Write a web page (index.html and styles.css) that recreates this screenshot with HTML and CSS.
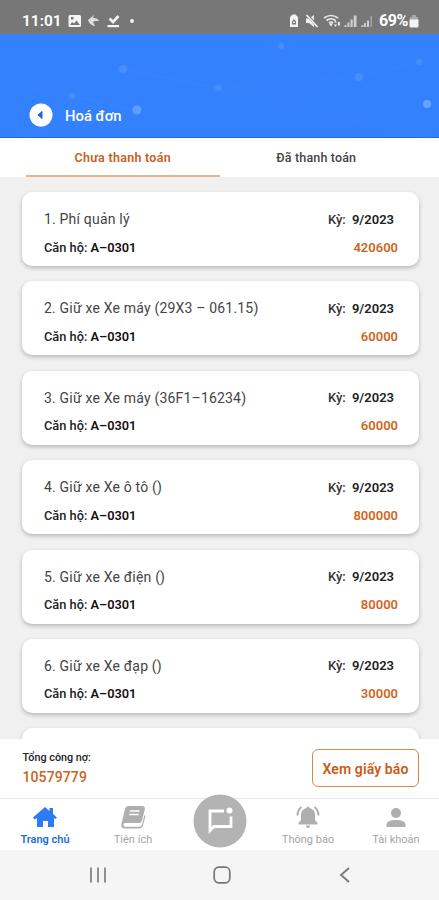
FILE: index.html
```html
<!DOCTYPE html>
<html lang="vi">
<head>
<meta charset="utf-8">
<meta name="viewport" content="width=device-width, initial-scale=1">
<title>Hoá đơn</title>
<link rel="stylesheet" href="styles.css">
</head>
<body>
<div class="app">
  <div class="status">
    <span class="clock">11:01</span>
    <svg class="status-left" width="74" height="16" viewBox="0 0 74 16" fill="#f4f4f4">
      <path fill-rule="evenodd" d="M3 2h9.500q1.500 0 1.500 1.500v9q0 1.500-1.500 1.500H3q-1.500 0-1.500-1.500v-9Q1.500 2 3 2zm0 10h10L9.500 7.500 7 10.500 5 9zM4 4v2.500h2.500V4z"/>
      <path d="M21 7l6-5-1 3q5 0 6 3l-4 0-2 1 2 4q-5-1-6-4z" fill="#dedede"/>
      <path d="M42.500 5.500l3.500 3.500L51.500 3" fill="none" stroke="#f4f4f4" stroke-width="2.600"/>
      <path d="M40.500 12h11.500v2.200H40.500z"/><circle cx="65" cy="8" r="1.900"/>
    </svg>
    <svg class="status-right" width="84" height="16" viewBox="0 0 84 16" fill="#f4f4f4">
      <path fill-rule="evenodd" d="M1 4l2.500-2.500h3L9 4v10H1zm2 7.500h4v-3L5 6 3 8.500z"/><path d="M4 8.500h2v1.500H4z"/>
      <path d="M17 5.500h3L25 2v12l-5-4h-3z"/><path d="M18 2l11 12" stroke="#777" stroke-width="3"/><path d="M17.500 2l11 12" stroke="#f4f4f4" stroke-width="1.700"/>
      <g fill="none" stroke="#e8e8e8" stroke-width="1.700"><path d="M35 5q7-5 14 0M37.500 7.500q4.500-3.500 9 0M40 10q2-1.700 4 0"/></g>
      <path d="M40 10.500h4l-2 3zM45 9.500l1.500-2L48 9.500zM45 11.500l1.500 2.500 1.500-2.500zM49 9h1.800v3.500H49z"/>
      <g fill="#cfcfcf"><path d="M55.500 12h2v2h-2zM58.500 9.500h2V14h-2zM61.500 6.500h2.200V14h-2.200zM64.700 2.500h2.800V14h-2.800z"/><path d="M72.500 12h1.800v2h-1.800zM75 10h2v4h-2zM78 7.500h2V14h-2z"/><path d="M81.500 3H83v11h-1.500z" fill="#a5a5a5"/></g>
    </svg>
    <span class="percent">69%</span>
    <svg class="battery" width="10" height="14" viewBox="0 0 10 14"><path d="M3 1h4v2h2v3H1V3h2z" fill="#aaa"/><path d="M.5 5.500h9V12q0 1.500-1.500 1.500H2Q.5 13.500.5 12z" fill="#f4f4f4"/></svg>
  </div>
  <header class="header">
    <svg class="network" width="439" height="104" viewBox="0 0 439 104">
      <g stroke="#79afff" stroke-width="1" opacity=".08" fill="none"><path d="M0 48l72 14 51-27 96 19 140-11 60-15M123 35l14 41M219 54l60-42M219 54l208 50M72 62l65 14M25 104l47-42"/></g>
      <g fill="#8fc0ff" opacity=".2"><circle cx="123" cy="35" r="4"/><circle cx="72" cy="62" r="3"/><circle cx="281" cy="12" r="3"/><circle cx="359" cy="43" r="4"/><circle cx="419" cy="28" r="3"/><circle cx="218" cy="54" r="3"/></g>
      <circle cx="137" cy="76" r="4.500" fill="#5c9eff"/><circle cx="427" cy="70" r="4" fill="#66a4ff"/>
    </svg>
    <div class="title-row">
      <svg width="24" height="24" viewBox="0 0 24 24"><circle cx="12" cy="12" r="11.500" fill="#fff"/><path d="M9 12l4-3.500v7z" fill="#1768dc" stroke="#1768dc" stroke-linejoin="round"/></svg>
      <h1>Hoá đơn</h1>
    </div>
  </header>
  <nav class="tabs">
    <div class="tab active"><span>Chưa thanh toán</span></div>
    <div class="tab"><span>Đã thanh toán</span></div>
  </nav>
  <main class="list">
    <article class="card"><div class="row"><h2>1. Phí quản lý</h2><span class="period">Kỳ: <b>9/2023</b></span></div><div class="row"><span class="unit">Căn hộ: <b>A–0301</b></span><span class="amount">420600</span></div></article>
    <article class="card"><div class="row"><h2>2. Giữ xe Xe máy (29X3 – 061.15)</h2><span class="period">Kỳ: <b>9/2023</b></span></div><div class="row"><span class="unit">Căn hộ: <b>A–0301</b></span><span class="amount">60000</span></div></article>
    <article class="card"><div class="row"><h2>3. Giữ xe Xe máy (36F1–16234)</h2><span class="period">Kỳ: <b>9/2023</b></span></div><div class="row"><span class="unit">Căn hộ: <b>A–0301</b></span><span class="amount">60000</span></div></article>
    <article class="card"><div class="row"><h2>4. Giữ xe Xe ô tô ()</h2><span class="period">Kỳ: <b>9/2023</b></span></div><div class="row"><span class="unit">Căn hộ: <b>A–0301</b></span><span class="amount">800000</span></div></article>
    <article class="card"><div class="row"><h2>5. Giữ xe Xe điện ()</h2><span class="period">Kỳ: <b>9/2023</b></span></div><div class="row"><span class="unit">Căn hộ: <b>A–0301</b></span><span class="amount">80000</span></div></article>
    <article class="card"><div class="row"><h2>6. Giữ xe Xe đạp ()</h2><span class="period">Kỳ: <b>9/2023</b></span></div><div class="row"><span class="unit">Căn hộ: <b>A–0301</b></span><span class="amount">30000</span></div></article>
    <article class="card"></article>
  </main>
  <section class="total">
    <div><div class="total-label">Tổng công nợ:</div><div class="total-value">10579779</div></div>
    <button class="notice">Xem giấy báo</button>
  </section>
  <nav class="bottom">
    <div class="item home"><svg width="26" height="24" viewBox="0 0 26 24"><path d="M1 12.500L13 2l4.500 4V3H21v6l4 3.500-1.500 1.500L22 13v9h-6v-6h-5v6H5v-9l-2.500 1.500z" fill="#2c7cf5"/></svg><span>Trang chủ</span></div>
    <div class="item util"><svg width="26" height="24" viewBox="0 0 26 24"><path d="M8.500 1H22q3.500 0 2.800 3.500L22 15.500q-.6 2.500-3 2.500H5Q3.500 18 3.500 20T5.500 21.800H19q2.300 0 3-2.300l2.500-9.500 1 1-2.500 9.500Q22 23.500 19 23.500H4.500Q.5 23.500 1.500 18.500L5 4q.7-3 3.500-3z" fill="#afafaf"/><path d="M10 6h9.500M9.200 9.500h9.500" stroke="#fff" stroke-width="1.500"/></svg><span>Tiện ích</span></div>
    <div class="item chat"><svg width="54" height="54" viewBox="0 0 54 54"><circle cx="27" cy="27" r="26.500" fill="#b3b3b3"/><path d="M31 17H17v19.500l4-4h17V22.500" fill="none" stroke="#fff" stroke-width="2.800"/><circle cx="36.500" cy="16.500" r="3" fill="#fff"/></svg></div>
    <div class="item bell"><svg width="26" height="24" viewBox="0 0 26 24"><path d="M11.500 3Q11.500 1.500 13 1.500T14.500 3Q20 4.500 20 10v5l2.500 3v1.500h-19V18L6 15v-5q0-5.500 5.500-7zM11 20.500h4q0 2.500-2 2.500t-2-2.500z" fill="#afafaf"/><path d="M6.500 2Q2.500 5 2.500 10.500M19.500 2q4 3 4 8.500" fill="none" stroke="#afafaf" stroke-width="2"/></svg><span>Thông báo</span></div>
    <div class="item account"><svg width="26" height="24" viewBox="0 0 26 24"><circle cx="13" cy="8" r="5" fill="#afafaf"/><path d="M3.500 22v-2.500q0-4.500 9.500-4.500t9.500 4.500V22z" fill="#afafaf"/></svg><span>Tài khoản</span></div>
  </nav>
  <footer class="system">
    <svg width="18" height="18" viewBox="0 0 18 18"><path d="M2 1.500v15M9 1.500v15M16 1.500v15" stroke="#858585" stroke-width="1.800"/></svg>
    <svg width="18" height="18" viewBox="0 0 18 18"><rect x="1.200" y="1.200" width="15.600" height="15.600" rx="4.500" fill="none" stroke="#777" stroke-width="1.700"/></svg>
    <svg width="18" height="18" viewBox="0 0 18 18"><path d="M13 2L5 9l8 7" fill="none" stroke="#777" stroke-width="1.800"/></svg>
  </footer>
</div>
</body>
</html>
```
FILE: styles.css
```css
* { box-sizing: border-box; }
body { margin: 0; font-family: Roboto, "Noto Sans", sans-serif; background: #f0f0f0; }
svg { display: block; flex: none; }
h1, h2 { margin: 0; }
.app { width: 439px; height: 900px; display: flex; flex-direction: column; overflow: hidden; }
.status { height: 34px; flex: none; display: flex; align-items: center; padding: 7px 20px 0 22px; background: #777; color: #fff; }
.clock { width: 45px; font-size: 15.500px; font-weight: 600; line-height: 20px; white-space: nowrap; }
.status-right { margin-left: auto; }
.percent { font-size: 16px; font-weight: 700; line-height: 20px; margin-left: 6px; letter-spacing: -.4px; }
.battery { margin-left: 1px; }
.header { height: 104px; flex: none; display: grid; background: #3481fd; border-bottom: 1px solid #1b68df; }
.header > * { grid-area: 1 / 1; }
.title-row { display: flex; align-items: center; align-self: start; gap: 12px; padding: 69px 0 0 29px; }
h1 { font-size: 14.800px; font-weight: 500; line-height: 20px; padding-top: 1px; color: #fff; }
.tabs { height: 39px; flex: none; display: flex; padding: 0 26px; background: #fff; }
.tab { flex: 1; text-align: center; font-size: 12.500px; font-weight: 500; letter-spacing: .15px; line-height: 39px; color: #444; border-bottom: 2px solid transparent; }
.tab.active { color: #c9601b; font-weight: 600; letter-spacing: .27px; border-bottom-color: #e3b38e; }
.list { flex: 1; min-height: 0; overflow: hidden; padding: 15px 20px 0 22px; display: flex; flex-direction: column; gap: 15.400px; }
.card { height: 74px; flex: none; border-radius: 10px; background: #fff; padding: 15px 21px 0 22px; box-shadow: 0 2px 4px rgba(0, 0, 0, .24); }
.row { display: flex; justify-content: space-between; align-items: center; height: 24px; white-space: nowrap; }
.row + .row { height: 32px; }
h2 { font-size: 14px; font-weight: 400; letter-spacing: .19px; color: #444; }
.period { width: 70px; font-size: 13px; font-weight: 500; color: #333; display: flex; justify-content: space-between; padding-right: 4px; }
.period b { color: #222; }
.unit { font-size: 12.800px; font-weight: 500; color: #222; }
.unit b { color: #111; }
b { font-weight: 600; }
.amount { font-size: 13px; font-weight: 600; color: #d0661b; }
.total { height: 60px; flex: none; background: #fff; display: flex; justify-content: space-between; padding: 10px 20px 0 22.500px; border-bottom: 1px solid #e9e9e9; }
.total-label { font-size: 10.800px; font-weight: 500; line-height: 18px; color: #222; }
.total-value { font-size: 14px; font-weight: 500; line-height: 21px; letter-spacing: .1px; color: #cb631c; }
.notice { width: 107px; height: 38px; padding: 2px 0 0; border: 1px solid #d5894d; border-radius: 6px; background: #fff; color: #c85c17; font: 600 14px Roboto, sans-serif; letter-spacing: .1px; }
.bottom { height: 51px; flex: none; display: grid; grid-template-columns: 90px 86px 88px 88px 88px; background: #fff; }
.item { display: flex; flex-direction: column; align-items: center; padding-top: 6px; color: #a5a5a5; font-size: 11px; line-height: 15px; white-space: nowrap; }
.item span { margin-top: 3px; }
.home { color: #2070d2; font-weight: 600; }
.chat { padding: 0; margin-top: -5px; }
.system { height: 50px; flex: none; display: flex; justify-content: space-between; align-items: center; padding: 0 85px 0 89px; background: #f5f5f5; }
```
